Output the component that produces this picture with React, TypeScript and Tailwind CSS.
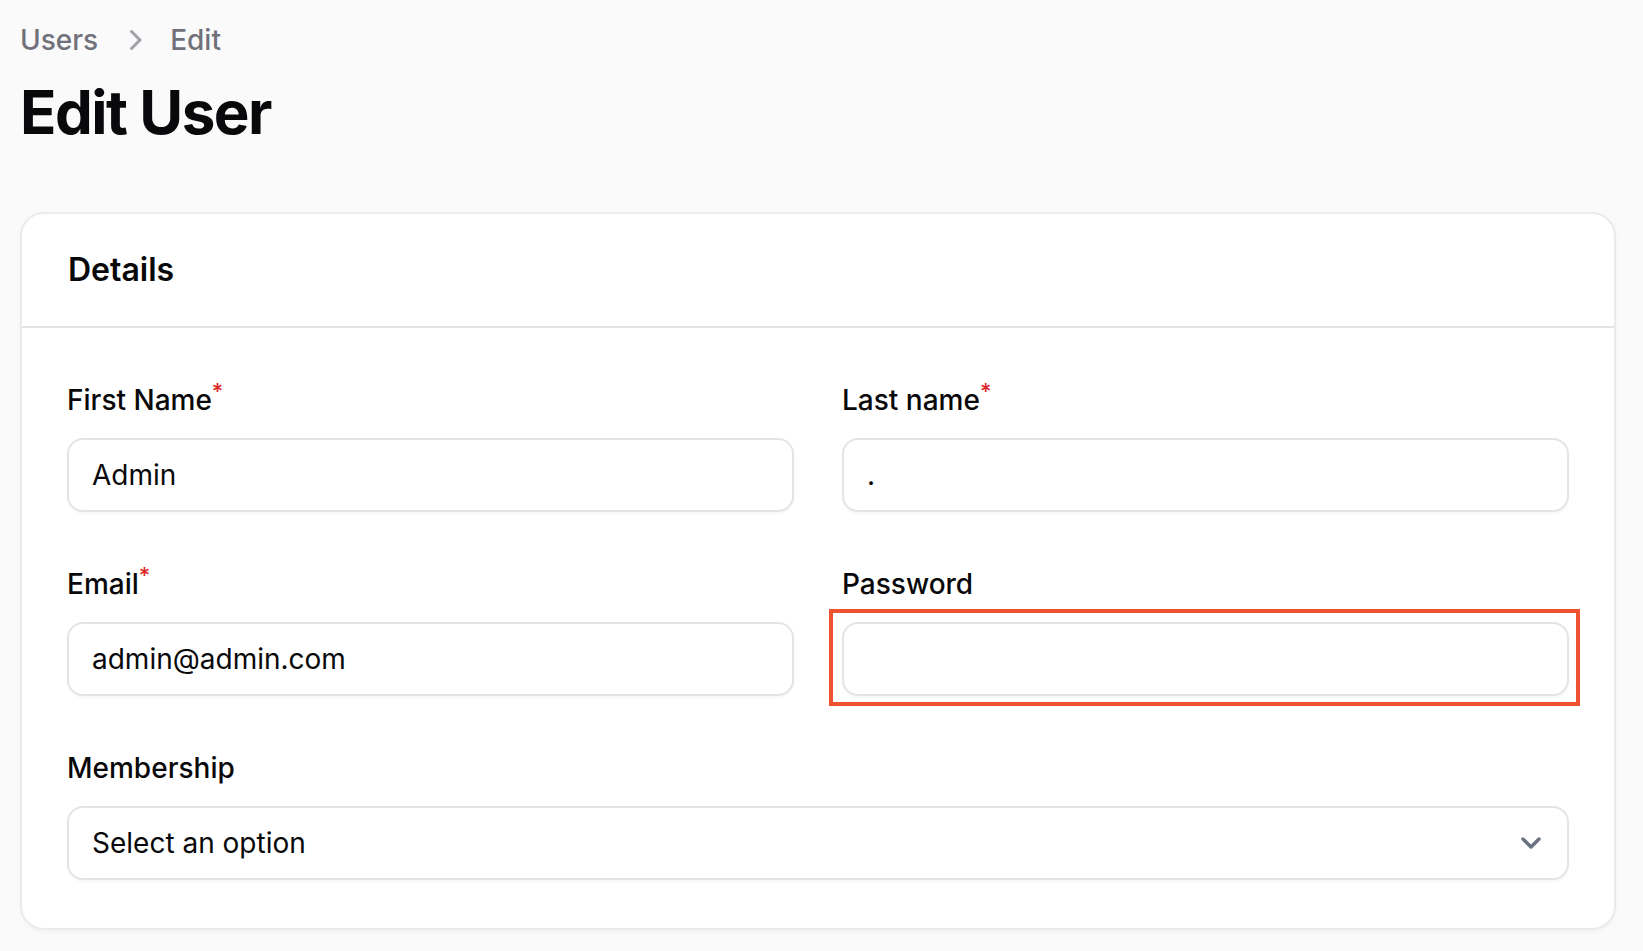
import React from 'react';

const ChevronRight: React.FC<{ className?: string }> = ({ className }) => (
  <svg viewBox="0 0 20 20" fill="currentColor" className={className}>
    <path
      fillRule="evenodd"
      d="M8.22 5.22a.75.75 0 0 1 1.06 0l4.25 4.25a.75.75 0 0 1 0 1.06l-4.25 4.25a.75.75 0 0 1-1.06-1.06L11.94 10 8.22 6.28a.75.75 0 0 1 0-1.06Z"
      clipRule="evenodd"
    />
  </svg>
);

const ChevronDown: React.FC<{ className?: string }> = ({ className }) => (
  <svg viewBox="0 0 20 20" fill="none" className={className}>
    <path d="M6 8l4 4 4-4" stroke="currentColor" strokeWidth="1.75" strokeLinecap="round" strokeLinejoin="round" />
  </svg>
);

const Label: React.FC<{ text: string; required?: boolean }> = ({ text, required }) => (
  <label className="text-[28px] leading-[48px] font-medium text-[#09090b]">
    {text}
    {required && <sup className="text-[#dc2626] font-medium text-[22px]">*</sup>}
  </label>
);

const TextInput: React.FC<{ value?: string; type?: string }> = ({ value, type = 'text' }) => (
  <input
    type={type}
    defaultValue={value}
    className="w-full h-[74px] rounded-2xl border-2 border-[#e4e4e7] bg-white px-[23px] text-[28px] text-[#09090b] outline-none shadow-[0_2px_2px_rgba(0,0,0,0.03)]"
  />
);

export default function App() {
  return (
    <div
      className="min-h-screen bg-[#fafafa] pl-5 pr-[27px] pt-5 pb-6"
      style={{ fontFamily: 'Inter, "Noto Sans", sans-serif' }}
    >
      {/* Breadcrumbs */}
      <nav className="flex items-center h-10 text-[28px] font-medium text-[#71717a]">
        <span>Users</span>
        <ChevronRight className="w-10 h-10 mx-4 text-[#a1a1aa]" />
        <span>Edit</span>
      </nav>

      <h1 className="mt-4 text-[60px] leading-[72px] font-bold tracking-tight text-[#09090b]">Edit User</h1>

      {/* Details section */}
      <section className="mt-16 bg-white rounded-3xl border-2 border-[#ebebeb] shadow-[0_2px_4px_rgba(0,0,0,0.03)]">
        <header className="px-[46px] py-8 border-b-2 border-[#e4e4e7]">
          <h2 className="text-[32px] leading-[48px] font-semibold text-[#09090b]">Details</h2>
        </header>
        <div className="px-[45px] py-12 grid grid-cols-2 gap-12">
          <div className="flex flex-col gap-[14px]">
            <Label text="First Name" required />
            <TextInput value="Admin" />
          </div>
          <div className="flex flex-col gap-[14px]">
            <Label text="Last name" required />
            <TextInput value="." />
          </div>
          <div className="flex flex-col gap-[14px]">
            <Label text="Email" required />
            <TextInput value="admin@admin.com" type="email" />
          </div>
          <div className="flex flex-col gap-[14px]">
            <Label text="Password" />
            <div className="relative">
              <TextInput type="password" />
              <div className="absolute -left-[13px] -top-[13px] -right-[11px] -bottom-[10px] border-4 border-[#ee5230] pointer-events-none" />
            </div>
          </div>
          <div className="col-span-2 flex flex-col gap-[14px]">
            <Label text="Membership" />
            <div className="w-full h-[74px] rounded-2xl border-2 border-[#e4e4e7] bg-white pl-[23px] pr-[16px] flex items-center justify-between text-[28px] text-[#09090b] shadow-[0_2px_2px_rgba(0,0,0,0.03)]">
              <span>Select an option</span>
              <ChevronDown className="w-10 h-10 text-[#6b7280]" />
            </div>
          </div>
        </div>
      </section>
    </div>
  );
}
